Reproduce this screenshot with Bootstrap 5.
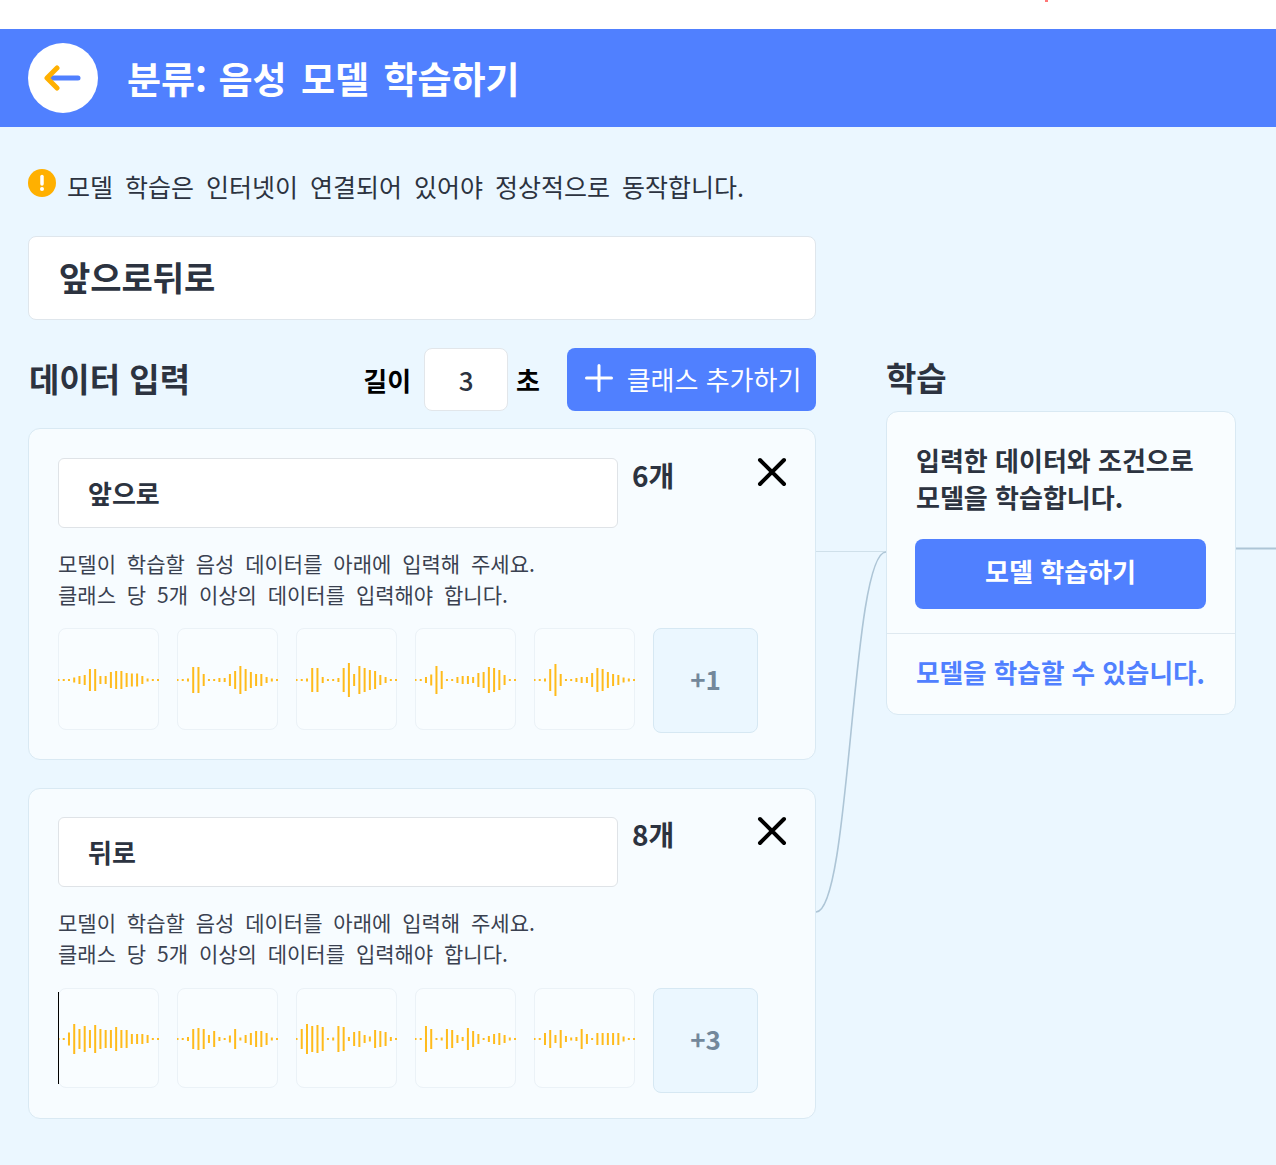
<!DOCTYPE html>
<html lang="ko">
<head>
    <meta charset="UTF-8">
    <title>분류: 음성 모델 학습하기</title>
    <link href="https://cdn.jsdelivr.net/npm/bootstrap@5.3.0/dist/css/bootstrap.min.css" rel="stylesheet">
    <style>
        html, body { overflow: hidden; }
        body {
            background: #fff;
            font-family: "Noto Sans CJK KR", "Noto Sans", sans-serif;
            color: #2c3340;
        }
        .top-strip { height: 29px; }
        .top-dot { width: 3px; height: 2px; margin-left: 1045px; background: #f77; }
        .page-head { height: 98px; background: #5080ff; padding-left: 28px; gap: 29px; }
        .back-btn { width: 70px; height: 70px; border: 0; border-radius: 50%; background: #fff; padding: 0; }
        .page-title { font-size: 37px; font-weight: 700; color: #fff; margin: 0; line-height: 1; word-spacing: 4px; }
        .title-lead { margin-right: -3px; }
        .page-body { position: relative; background: #ebf7ff; height: 1038px; padding: 42px 0 0 28px; }
        .notice { height: 67px; gap: 11px; font-size: 25px; line-height: 34px; word-spacing: 5px; }
        .notice svg { flex: none; }
        .name-box { width: 788px; height: 84px; font-size: 34px; font-weight: 700; padding: 0 30px 3px; border: 1px solid #dfe6ec; border-radius: 8px; background: #fff; color: #2c3340; }
        .left-col { width: 788px; }
        .right-col { width: 350px; margin-left: 70px; padding-top: 125px; }
        .sect-title { font-size: 33px; font-weight: 700; line-height: 1; margin: 0; }
        .tool-row { height: 63px; margin-top: 28px; margin-bottom: 17px; }
        .tool-row .sect-title { margin-left: 1px; padding-bottom: 3px; }
        .len-label { font-size: 26px; font-weight: 700; color: #000; }
        .len-unit { margin-right: 27px; }
        .len-input { width: 84px; height: 63px; margin: 0 8px 0 13px; border: 1px solid #e2e6ea; border-radius: 8px; background: #fff; text-align: center; font-size: 26px; font-weight: 500; color: #2c3340; padding: 0; }
        .add-btn { width: 249px; height: 63px; background: #5080ff; border: 0; border-radius: 8px; color: #fff; font-size: 26px; gap: 14px; padding: 0 0 2px 3px; }
        .add-btn svg { margin-bottom: 2px; }
        .add-btn:hover { background: #5080ff; color: #fff; }
        .class-box { height: 332px; padding: 29px 0 0 29px; background: #f7fcff; border: 1px solid #d9e9f3; border-radius: 12px; margin-bottom: 28px; }
        .class-box-short { height: 331px; padding-top: 28px; }
        .class-head { height: 70px; }
        .class-name { width: 560px; height: 70px; font-size: 26px; font-weight: 700; padding: 0 29px 2px; border: 1px solid #dfe3e7; border-radius: 6px; background: #fff; color: #2c3340; }
        .class-count { width: 125px; margin-left: 14px; margin-top: -1px; font-size: 28px; font-weight: 700; line-height: 36px; }
        .close-btn { width: 30px; height: 30px; margin-top: -1px; padding: 0; border: 0; background: none; line-height: 0; }
        .help-text { font-size: 21px; line-height: 31px; word-spacing: 5px; margin: 20px 0 18px; color: #3a4150; }
        .class-box-short .help-text { margin-bottom: 19px; }
        .clip-row { gap: 18px; }
        .clip-box { position: relative; width: 101px; height: 102px; border: 1px solid #ebf2f7; border-radius: 8px; background: #f9fdff; }
        .class-box-short .clip-box { height: 100px; }
        .clip-box svg { display: block; position: absolute; left: -1px; top: -1px; }
        .play-head { position: absolute; left: -1px; top: 3px; bottom: 3px; width: 1px; background: #000; }
        .more-box { width: 105px; height: 105px; padding-bottom: 4px; background: #ebf7ff; border: 1px solid #d6e8f3; border-radius: 8px; font-size: 26px; font-weight: 700; color: #73889b; }
        .train-card { margin-top: 17px; height: 304px; background: #f9fdff; border: 1px solid #d9e9f3; border-radius: 12px; }
        .train-top { height: 222px; padding: 29px 29px 0 29px; border-bottom: 1px solid #dfe9f0; }
        .train-text { font-size: 26px; font-weight: 700; line-height: 37px; margin: 0 0 24px; }
        .train-btn { width: 291px; height: 70px; padding-bottom: 14px; background: #5080ff; border: 0; border-radius: 8px; color: #fff; font-size: 26px; font-weight: 700; margin-left: -1px; display: block; }
        .train-btn:hover { background: #5080ff; color: #fff; }
        .train-state { font-size: 25.6px; font-weight: 700; color: #5080ff; padding: 18px 0 0 29px; line-height: 40px; margin: 0; white-space: nowrap; }
        .wire-layer { position: absolute; left: 0; top: 0; pointer-events: none; }
    </style>
</head>
<body>
    <div class="top-strip"><div class="top-dot"></div></div>
    <header class="page-head d-flex align-items-center">
        <button class="back-btn d-flex align-items-center justify-content-center" aria-label="뒤로">
            <svg width="38" height="28" viewBox="0 0 38 28" fill="none" stroke-linecap="round" stroke-linejoin="round">
                <path d="M8 14H34" stroke="#5080ff" stroke-width="5"/>
                <path d="M13 4 3 14 13 24" stroke="#ffb000" stroke-width="5"/>
            </svg>
        </button>
        <h1 class="page-title"><span class="title-lead">분류:</span> 음성 모델 학습하기</h1>
    </header>

    <main class="page-body">
        <svg class="wire-layer" width="1276" height="1038" fill="none">
            <path d="M816 424.500H886" stroke="#cfe0ea" stroke-width="1"/>
            <path d="M816 785C851 785 851 425 886 425" stroke="#adc5d6" stroke-width="1.600"/>
            <path d="M1236 421.500H1276" stroke="#adc5d6" stroke-width="1.800"/>
        </svg>

        <div class="notice d-flex">
            <svg width="28" height="28" viewBox="0 0 28 28">
                <circle cx="14" cy="14" r="14" fill="#ffb000"/>
                <path d="M14 7.500V15" stroke="#fff" stroke-width="3.500" stroke-linecap="round"/>
                <circle cx="14" cy="20" r="2" fill="#fff"/>
            </svg>
            <span>모델 학습은 인터넷이 연결되어 있어야 정상적으로 동작합니다.</span>
        </div>

        <div class="d-flex">
            <div class="left-col">
                <input class="name-box d-block" type="text" value="앞으로뒤로">

                <div class="tool-row d-flex align-items-center">
                    <h2 class="sect-title">데이터 입력</h2>
                    <span class="len-label ms-auto">길이</span>
                    <input class="len-input" type="text" value="3">
                    <span class="len-label len-unit">초</span>
                    <button class="btn add-btn d-flex align-items-center justify-content-center">
                        <svg width="28" height="28" viewBox="0 0 28 28" stroke="#fff" stroke-width="3" stroke-linecap="round"><path d="M14 1.500V26.500M1.500 14H26.500"/></svg>
                        클래스 추가하기
                    </button>
                </div>

                <section class="class-box">
                    <div class="class-head d-flex">
                        <input class="class-name" type="text" value="앞으로">
                        <span class="class-count">6개</span>
                        <button class="close-btn" aria-label="삭제"><svg width="30" height="30" viewBox="0 0 30 30" stroke="#000" stroke-width="4" stroke-linecap="round"><path d="M3 3 27 27M27 3 3 27"/></svg></button>
                    </div>
                    <p class="help-text">모델이 학습할 음성 데이터를 아래에 입력해 주세요.<br>클래스 당 5개 이상의 데이터를 입력해야 합니다.</p>
                    <div class="clip-row d-flex">
                        <div class="clip-box" data-wave="1,1,1,2.5,4,5,11,11,4,4,8,9,9,7,6.5,6.5,4,1.5,1,1"></div>
                        <div class="clip-box" data-wave="1,1,1.5,13,13,6,1,1,2,2,6,9,14,11,8,6,6,3,1.5,1"></div>
                        <div class="clip-box" data-wave="1,1,1.5,12,12,3,1,1,2,12,17,6,14,12,10,9,5,3,1,1"></div>
                        <div class="clip-box" data-wave="1,1,3,5.5,14,9,1,1,3,4,4,3,7,8,13,12,10,5,1,1"></div>
                        <div class="clip-box" data-wave="1,1,1.5,11,16,6,1,1,2,3,3,7,12,11,8,6,5,2.5,1.5,1"></div>
                        <div class="more-box d-flex align-items-center justify-content-center">+1</div>
                    </div>
                </section>

                <section class="class-box class-box-short">
                    <div class="class-head d-flex">
                        <input class="class-name" type="text" value="뒤로">
                        <span class="class-count">8개</span>
                        <button class="close-btn" aria-label="삭제"><svg width="30" height="30" viewBox="0 0 30 30" stroke="#000" stroke-width="4" stroke-linecap="round"><path d="M3 3 27 27M27 3 3 27"/></svg></button>
                    </div>
                    <p class="help-text">모델이 학습할 음성 데이터를 아래에 입력해 주세요.<br>클래스 당 5개 이상의 데이터를 입력해야 합니다.</p>
                    <div class="clip-row d-flex align-items-start">
                        <div class="clip-box" data-wave="1,1,6.5,15,10,13,9,14,10,9,9,12,9,9,5,5,5,4,1,1"><div class="play-head"></div></div>
                        <div class="clip-box" data-wave="1,1,2,10,11,10,4,8,2,1,3.5,10,1.5,4,6,8,8,6,1.5,1"></div>
                        <div class="clip-box" data-wave="1,10,15,13,14,12,1,1.5,13,12,2,7,8,4,2.5,9,8,7,2,1"></div>
                        <div class="clip-box" data-wave="1,1,13,10,1,1.5,10,9,4,2,11,8,5,1,3,5,6,4,1.5,1"></div>
                        <div class="clip-box" data-wave="1,1,6,9,4,9,3,1.5,2,10,5,1,6,6,6,6,6,2.5,1,1"></div>
                        <div class="more-box d-flex align-items-center justify-content-center">+3</div>
                    </div>
                </section>
            </div>

            <div class="right-col">
                <h2 class="sect-title">학습</h2>
                <div class="train-card">
                    <div class="train-top">
                        <p class="train-text">입력한 데이터와 조건으로<br>모델을 학습합니다.</p>
                        <button class="btn train-btn">모델 학습하기</button>
                    </div>
                    <p class="train-state">모델을 학습할 수 있습니다.</p>
                </div>
            </div>
        </div>
    </main>

    <script src="https://cdn.jsdelivr.net/npm/bootstrap@5.3.0/dist/js/bootstrap.bundle.min.js"></script>
    <script>
        // draw the waveform bars from the amplitudes in data-wave
        document.querySelectorAll('[data-wave]').forEach(function (box) {
            const amps = box.dataset.wave.split(',').map(Number);
            const h = box.clientHeight + 2;
            const mid = h / 2 + 1;
            let d = '';
            amps.forEach(function (a, i) {
                const x = 0.5 + i * 5.24;
                d += 'M' + x.toFixed(2) + ' ' + (mid - a) + 'V' + (mid + a);
            });
            box.insertAdjacentHTML('afterbegin',
                '<svg width="101" height="' + h + '"><path d="' + d + '" stroke="#ffbb1c" stroke-width="2"/></svg>');
        });
    </script>
</body>
</html>
